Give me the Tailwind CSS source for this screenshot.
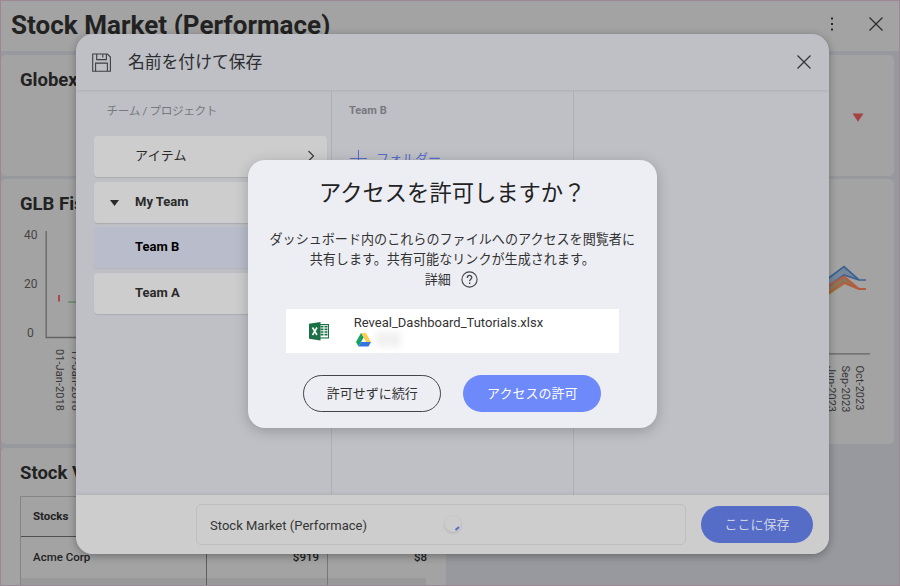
<!DOCTYPE html>
<html lang="ja">
<head>
<meta charset="utf-8">
<title>Stock Market (Performace)</title>
<script src="https://cdn.jsdelivr.net/npm/@tailwindcss/browser@4"></script>
</head>
<body class="w-[900px] h-[586px] overflow-hidden relative font-[Roboto,'Noto_Sans_CJK_JP',sans-serif] text-[#222]">

<!-- Dashboard -->
<div class="w-[900px] h-[586px] overflow-hidden bg-[#98999e] border border-[#9d8795] flex flex-col">
  <header class="h-[50px] shrink-0 bg-[#a3a3a3] flex items-center pl-[10px] pr-[15px]">
    <h1 class="text-[26px] leading-[30px] font-bold tracking-[0.04px] pb-[3px] whitespace-nowrap">Stock Market (Performace)</h1>
    <svg class="ml-auto -mt-[4px]" width="4" height="16" viewBox="0 0 4 16" fill="#2b2b2b"><rect x="1" y="1.500" width="2" height="2"/><rect x="1" y="7" width="2" height="2"/><rect x="1" y="12.500" width="2" height="2"/></svg>
    <svg class="ml-[34px] -mt-[4px]" width="16" height="16" viewBox="0 0 16 16" stroke="#2b2b2b" stroke-width="1.200"><path d="M1.500 1.500 14.500 14.500M14.500 1.500 1.500 14.500"/></svg>
  </header>
  <section class="mt-1 h-[121px] w-[893px] shrink-0 rounded-[5px] bg-[#a3a3a3] flex items-start justify-between pl-[19px] pr-[30px]">
    <h2 class="text-[18.500px] leading-[22px] font-bold pt-[14px]">Globex</h2>
    <svg class="mt-[58px]" width="12" height="9" viewBox="0 0 12 9"><path d="M.5.5h11L6 8.700z" fill="#a54242"/></svg>
  </section>
  <section class="mt-[3px] h-[265px] w-[893px] shrink-0 rounded-[5px] bg-[#a3a3a3] flex flex-col">
    <h2 class="text-[18.500px] leading-[22px] font-bold pt-[14px] pl-[19px] h-[36px]">GLB Fiscal</h2>
    <svg width="893" height="229" viewBox="1 215 893 229" fill="none" font-family="Roboto" font-size="12">
      <g fill="#444"><text x="24" y="239">40</text><text x="24" y="288">20</text><text x="27" y="337">0</text></g>
      <path d="M46.200 231V337.500H90" stroke="#646464" stroke-width="1.300"/>
      <path d="M829 353.800h41" stroke="#646464" stroke-width="1.300"/>
      <rect x="58" y="295" width="2" height="6.500" fill="#a54a4a"/>
      <path d="M68 302h10" stroke="#4e7e54"/>
      <path d="M828 278.500 844 266.500 859 280 844 275 828 286z" fill="#75879b"/>
      <path d="M828 285.500 844 276 859 289 844 283 828 294z" fill="#8c7557"/>
      <path d="M828 278.500 844 266.500 859 280h7M828 286.500 844 275l15 5" stroke="#3c6192" stroke-width="1.700"/>
      <path d="M828 294.700 844 284" stroke="#88883d" stroke-width="1.200"/>
      <path d="M828 286 844 276.500 859 289h7M828 293.500 844 282.800 859 289" stroke="#b45c3f" stroke-width="1.900"/>
      <g fill="#373737" font-size="11">
        <text transform="translate(56 349) rotate(90)" textLength="62">01-Jan-2018</text>
        <text transform="translate(72.300 349) rotate(90)" textLength="62">17-Jan-2018</text>
        <text transform="translate(827.500 366) rotate(90)" textLength="46">Jun-2023</text>
        <text transform="translate(841.500 365.500) rotate(90)" textLength="47">Sep-2023</text>
        <text transform="translate(856 365.500) rotate(90)" textLength="45">Oct-2023</text>
      </g>
    </svg>
  </section>
  <section class="mt-1 h-[150px] w-[445px] shrink-0 rounded-tl-[5px] bg-[#a3a3a3] pl-[19px]">
    <h2 class="text-[18.500px] leading-[22px] font-bold pt-[14px] h-[48px]">Stock Values</h2>
    <div class="w-[406px] border-l border-t border-[#858585] text-[11.500px]">
      <div class="h-[40px] border-b border-[#4f4f4f] flex items-center pl-[12px] font-bold">Stocks</div>
      <div class="h-[41px] grid grid-cols-[186px_121px_99px] font-medium leading-[40px]">
        <div class="pl-[12px] border-r border-[#5f5f5f]">Acme Corp</div>
        <div class="text-right pr-[8px] border-r border-[#777]">$919</div>
        <div class="text-right">$8</div>
      </div>
      <div class="h-[10px] bg-[#999] grid grid-cols-[186px_121px_98px]"><div class="border-r border-[#5f5f5f]"></div><div class="border-r border-[#777]"></div></div>
    </div>
  </section>
</div>

<!-- Save panel -->
<div class="absolute left-[75.500px] top-[34.300px] w-[753.500px] h-[520px] rounded-[17px] bg-[#bec0c5] shadow-[0_2px_9px_rgba(0,0,0,0.32)] overflow-hidden flex flex-col">
  <header class="h-[56.700px] shrink-0 flex items-center pl-[16.500px] pr-[17px] border-b border-[#b3b5ba] shadow-[0_1px_2px_rgba(0,0,0,0.04)]">
    <svg width="19" height="19" viewBox="0 0 19 19" fill="none" stroke="#3d3e42" stroke-width="1.100"><path d="M.7 1h14.800L18.400 4v14.300H.7zM4.700 1v5.600h9.700V1M10.800 1v3.600M3.600 18.300v-8.200h11.800v8.200"/></svg>
    <span class="ml-[17px] text-[16.800px] leading-6 text-[#2c2d30]">名前を付けて保存</span>
    <svg class="ml-auto" width="16" height="16" viewBox="0 0 16 16" stroke="#303136" stroke-width="1.200"><path d="M1.500 1.500 14.500 14.500M14.500 1.500 1.500 14.500"/></svg>
  </header>
  <div class="flex-1 grid grid-cols-[256.500px_242px_255px]">
    <div class="pl-[18.500px] border-r border-[#aeb0b5]">
      <div class="h-[45px] pl-[12.500px] pt-[12px] text-[11.700px] leading-4 tracking-[-0.400px] text-[#77797e] whitespace-pre">チーム / プロジェクト</div>
      <div class="flex flex-col gap-[4.600px] w-[233px] text-[13px] text-[#2a2a2a]">
        <div class="h-[41px] pb-[1px] rounded-[4px] bg-[#cdcdcd] shadow-[0_1px_1px_rgba(0,0,0,0.1)] flex items-center pl-[41px] pr-[12px]"><span class="tracking-[0.300px]">アイテム</span><svg class="ml-auto" width="8" height="12" viewBox="0 0 8 12" fill="none" stroke="#3a3a3a" stroke-width="1.200"><path d="M1.500 1 6.500 6 1.500 11"/></svg></div>
        <div class="h-[41px] pb-[1px] rounded-[4px] bg-[#cdcdcd] shadow-[0_1px_1px_rgba(0,0,0,0.1)] flex items-center pl-4 font-bold"><svg class="mt-[3px] mr-[16px]" width="9" height="6" viewBox="0 0 9 6"><path d="M0 0h9L4.500 6z" fill="#2a2a2a"/></svg>My Team</div>
        <div class="h-[41px] pb-[1px] rounded-[4px] bg-[#b9bdcb] shadow-[0_1px_1px_rgba(0,0,0,0.06)] flex items-center pl-[41px] font-bold text-black">Team B</div>
        <div class="h-[41px] pb-[1px] rounded-[4px] bg-[#cdcdcd] shadow-[0_1px_1px_rgba(0,0,0,0.1)] flex items-center pl-[41px] font-bold">Team A</div>
      </div>
    </div>
    <div class="pl-[17px] pt-[12px] border-r border-[#aeb0b5]">
      <div class="text-[11.100px] leading-4 font-bold text-[#77797e]">Team B</div>
      <div class="mt-[30px] flex items-center text-[13px] leading-5 text-[#566dc8]"><svg class="mr-[9px] ml-[1px]" width="17" height="17" viewBox="0 0 17 17" stroke="#566dc8"><path d="M8.500 0v17M0 8.500h17"/></svg>フォルダー</div>
    </div>
    <div></div>
  </div>
  <footer class="h-[59px] shrink-0 bg-[#cdcdcd] shadow-[0_-1px_3px_rgba(0,0,0,0.08)] flex items-center pl-[120.500px] pr-[16px] justify-between">
    <div class="w-[490px] h-[41px] border border-[#bebfc0] rounded-[5px] flex items-center pl-[13px] text-[13px] text-[#353535]"><span class="pt-[2px] tracking-[0.020px] whitespace-nowrap">Stock Market (Performace)</span>
      <div class="ml-[78px] mt-[-1px] w-4 h-4 rounded-full shadow-[0_1px_3px_rgba(0,0,0,0.14)]"><svg width="16" height="16" viewBox="0 0 16 16"><path d="M10.500 14 14 11" stroke="#566dc8" stroke-width="2"/></svg></div>
    </div>
    <button class="w-[112px] h-[37px] rounded-full bg-[#566dc8] text-[13px] text-[#cdd2e6]">ここに保存</button>
  </footer>
</div>

<!-- Access confirmation -->
<div class="absolute left-[247.500px] top-[160px] w-[409.500px] h-[268px] rounded-[17px] bg-[#edeef4] shadow-[0_3px_14px_rgba(0,0,0,0.22)] flex flex-col items-center text-[#333]">
  <h2 class="pt-[17px] h-[70px] text-[22.300px] leading-8 text-[#222] whitespace-nowrap">アクセスを許可しますか？</h2>
  <p class="text-[13.080px] leading-[20px] text-center whitespace-nowrap">ダッシュボード内のこれらのファイルへのアクセスを閲覧者に<br>共有します。共有可能なリンクが生成されます。</p>
  <div class="flex items-center h-[19px] text-[13px] leading-5 gap-[10px] pr-[2px]">詳細<svg width="17" height="17" viewBox="0 0 17 17" fill="none" stroke="#444"><circle cx="8.500" cy="8.500" r="7.600" stroke-width="1.100"/><path d="M6.300 7c0-3.500 4.500-3.200 4.500-.5 0 1.700-2.200 1.700-2.200 3.700" stroke-width="1.300"/><path d="M8.600 11.500v1.500" stroke-width="1.400"/></svg></div>
  <div class="mt-5 w-[333px] h-[44px] bg-white flex pl-[23px]">
    <svg class="mt-[13px]" width="20" height="19" viewBox="0 0 20 19"><rect x="10" y="2" width="10" height="14.500" fill="#1c7045"/><path d="M11 3.200h8v12.200h-8z" fill="#fff"/><path d="M11.500 4h3v1.600h-3zm4 0h3v1.600h-3zm-4 2.600h3v1.600h-3zm4 0h3v1.600h-3zm-4 2.600h3v1.600h-3zm4 0h3v1.600h-3zm-4 2.600h3v1.600h-3zm4 0h3v1.600h-3z" fill="#1c7045"/><path d="M0 1.800 11.500 0v18.500L0 16.700z" fill="#1c7045"/><path d="M3.500 5.500 8 13M8 5.500 3.500 13" stroke="#fff" stroke-width="1.600"/></svg>
    <div class="ml-[25px] pt-[6px] text-[13px] leading-4">
      <div class="whitespace-nowrap">Reveal_Dashboard_Tutorials.xlsx</div>
      <div class="flex pl-[2px] pt-[2px]"><svg width="15" height="14" viewBox="0 0 15 14"><path d="M5 0h5l5 9h-5z" fill="#ffce51"/><path d="M5 0 0 9l2.500 4.500L7.600 4.500z" fill="#17a260"/><path d="M5 9h10l-2.500 4.500h-10z" fill="#3475df"/></svg><div class="ml-[5px] mt-[-1px] w-[25px] h-[15px] bg-[#f1f1f2] blur-[3px]"></div></div>
    </div>
  </div>
  <div class="mt-[22px] flex gap-[22px] text-[13px]">
    <button class="w-[138px] h-[37px] rounded-full border border-[#444] text-[#333]">許可せずに続行</button>
    <button class="w-[138px] h-[37px] rounded-full bg-[#6e89f9] text-white">アクセスの許可</button>
  </div>
</div>
</body>
</html>
